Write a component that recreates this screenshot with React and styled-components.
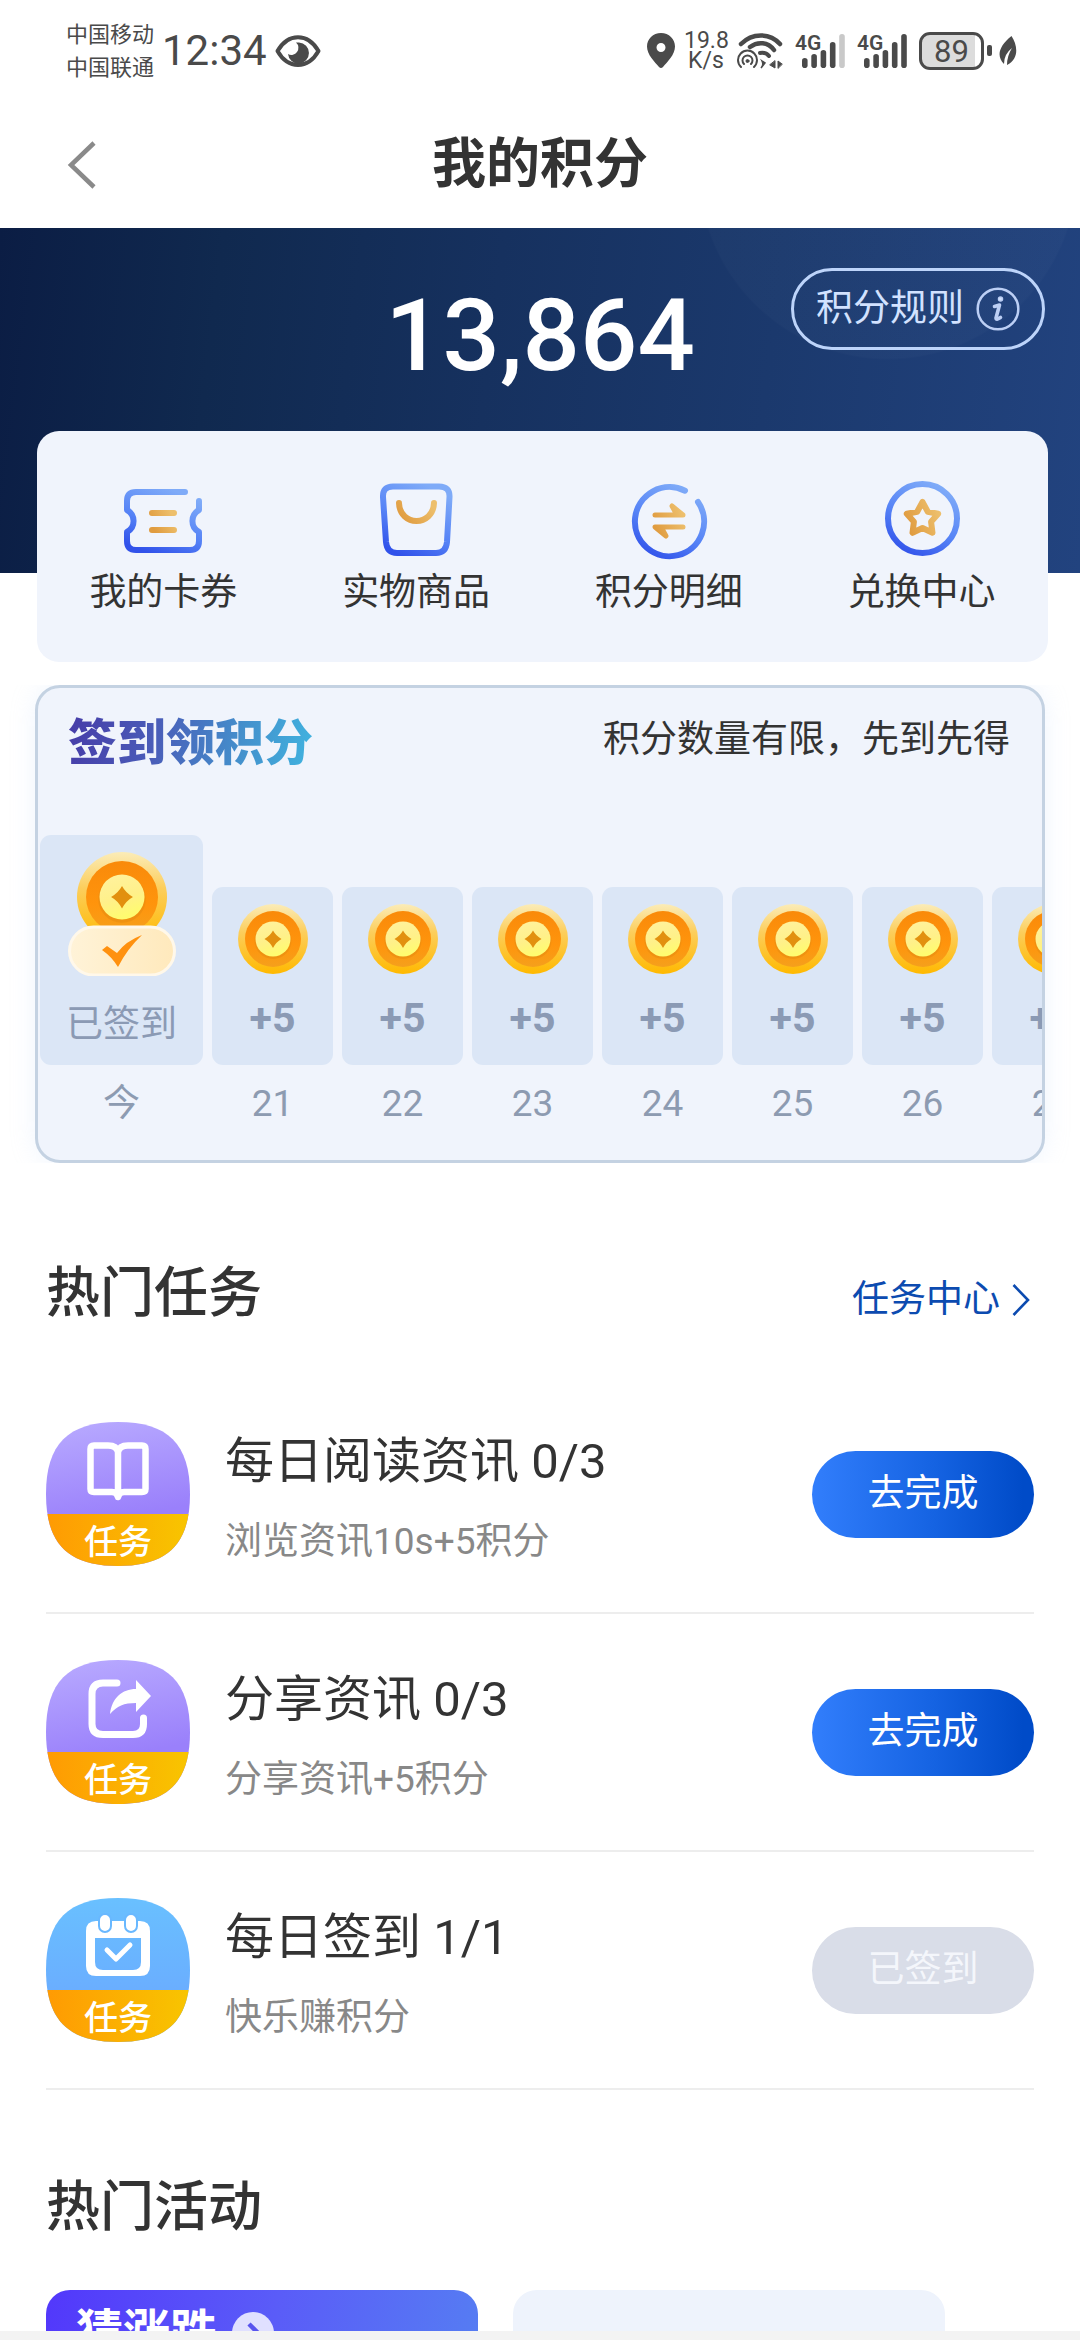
import React from "react";
import styled, { createGlobalStyle } from "styled-components";

const GlobalStyle = createGlobalStyle`
  *, *::before, *::after { box-sizing: border-box; }
  body {
    margin: 0;
    background: #fff;
    color: #333;
    font-family: Roboto, "Noto Sans CJK SC", sans-serif;
    font-size: 37px;
    line-height: 48px;
  }
  h1, h2, h3, p, ul { margin: 0; padding: 0; }
  ul { list-style: none; }
  button { font: inherit; color: inherit; border: 0; padding: 0; background: none; cursor: pointer; }
  a { color: inherit; text-decoration: none; }
  svg { display: block; flex: none; }
`;

const Screen = styled.div`
  height: 100vh;
  display: flex;
  flex-direction: column;
`;

const Scroller = styled.main`
  flex: 1;
  min-height: 0;
  overflow-y: auto;
  scrollbar-width: none;
`;

const GestureBar = styled.div`
  flex: none;
  height: 9px;
  background: #f3f3f3;
`;

/* ---------- status bar ---------- */

const StatusBar = styled.div`
  flex: none;
  display: flex;
  align-items: center;
  justify-content: space-between;
  height: 101px;
  padding: 0 63px 0 66px;
  color: #4a4a4a;
`;

const StatusGroup = styled.div`
  display: flex;
  align-items: center;
  gap: ${(p) => p.$gap}px;
`;

const Carriers = styled.div`
  font-size: 22px;
  line-height: 33px;
`;

const Clock = styled.div`
  font-size: 42px;
`;

const Speed = styled.div`
  width: 44px;
  font-size: 23px;
  line-height: 20px;
  text-align: center;
`;

const Signal = styled.div`
  width: 50px;
  height: 36px;
  position: relative;
`;

const SignalLabel = styled.span`
  position: absolute;
  left: 0;
  top: 0;
  font-weight: 600;
  font-size: 21px;
  line-height: 20px;
`;

const Battery = styled.div`
  display: flex;
  align-items: center;
  gap: 3px;
  &::after {
    content: "";
    width: 5px;
    height: 11px;
    border-radius: 2px;
    background: #4a4a4a;
  }
`;

const BatteryCell = styled.div`
  width: 65px;
  height: 38px;
  border: 3px solid #4a4a4a;
  border-radius: 11px;
  background: linear-gradient(90deg, #dcdcdc 89%, #fff 89%);
  font-size: 31px;
  line-height: 33px;
  text-align: center;
`;

/* ---------- title bar ---------- */

const TitleBar = styled.header`
  flex: none;
  display: grid;
  grid-template-columns: 1fr auto 1fr;
  align-items: center;
  height: 127px;
  padding: 0 64px;
`;

const BackButton = styled.button`
  justify-self: start;
  display: flex;
`;

const PageTitle = styled.h1`
  font-size: 54px;
  line-height: 72px;
  font-weight: 700;
`;

/* ---------- hero ---------- */

const Hero = styled.section`
  display: grid;
  grid-template-columns: 1fr auto 1fr;
  align-items: start;
  height: 345px;
  padding: 40px 35px 0;
  background:
    radial-gradient(circle 190px at 888px -58px, rgba(255, 255, 255, 0.02) 99%, transparent 100%),
    linear-gradient(97deg, #0b1d44 0%, #10294f 20%, #16315f 45%, #1b396d 70%, #22437f 100%);
`;

const Balance = styled.p`
  grid-column: 2;
  font-size: 101px;
  line-height: 136px;
  font-weight: 500;
  color: #fff;
`;

const RuleButton = styled.button`
  justify-self: end;
  display: flex;
  align-items: center;
  gap: 12px;
  height: 82px;
  padding: 0 22px;
  border: 3px solid #bdd4fa;
  border-radius: 41px;
  color: #d2e2ff;
`;

const QuickCard = styled.nav`
  display: grid;
  grid-template-columns: repeat(4, 1fr);
  margin: -142px 32px 0 37px;
  padding: 49px 0 45px;
  border-radius: 22px;
  background: #f0f4fc;
  position: relative;
`;

const QuickLink = styled.a`
  display: flex;
  flex-direction: column;
  align-items: center;
  gap: 9px;
`;

/* ---------- check-in ---------- */

const CheckInWrap = styled.section`
  margin-top: 23px;
  padding: 0 35px;
  overflow: hidden;
`;

const CheckInCard = styled.div`
  height: 478px;
  border: 3px solid #c4d2e2;
  border-radius: 25px;
  background: #f0f4fc;
  box-shadow: 0 0 24px rgba(190, 215, 250, 0.25);
  overflow: hidden;
`;

const CheckInHead = styled.div`
  display: flex;
  justify-content: space-between;
  padding: 28px 32px 0 30px;
`;

const CheckInTitle = styled.h2`
  font-size: 49px;
  line-height: 56px;
  font-weight: 900;
  background: linear-gradient(100deg, #463ca8 0%, #4a5cb8 35%, #4490cc 70%, #40b4e0 100%);
  background-clip: text;
  -webkit-background-clip: text;
  color: transparent;
`;

const Days = styled.ul`
  display: flex;
  align-items: flex-end;
  gap: 9px;
  margin-top: 63px;
  padding-left: 2px;
`;

const Day = styled.li`
  flex: none;
  width: ${(p) => (p.$today ? 163 : 121)}px;
  text-align: center;
  color: #8d9bb1;
`;

const DayTile = styled.div`
  display: flex;
  flex-direction: column;
  align-items: center;
  justify-content: space-between;
  height: ${(p) => (p.$today ? 230 : 178)}px;
  padding: 17px 0 ${(p) => (p.$today ? 16 : 23)}px;
  margin-bottom: 15px;
  border-radius: 11px;
  background: #dbe6f6;
`;

const Reward = styled.span`
  font-size: ${(p) => (p.$today ? 37 : 41)}px;
  font-weight: ${(p) => (p.$today ? 400 : 700)};
  color: #8b9ab4;
`;

/* ---------- tasks ---------- */

const Section = styled.section`
  padding: 0 46px;
  margin-top: ${(p) => p.$top}px;
`;

const SectionHead = styled.div`
  display: flex;
  align-items: center;
  justify-content: space-between;
`;

const SectionTitle = styled.h2`
  font-size: 54px;
  line-height: 72px;
  font-weight: 500;
`;

const MoreLink = styled.a`
  display: flex;
  align-items: center;
  gap: 12px;
  padding: 12px 4px 0 0;
  color: #0c4bb0;
`;

const TaskList = styled.ul`
  margin-top: 46px;
`;

const TaskRow = styled.li`
  display: flex;
  align-items: center;
  height: 238px;
  border-bottom: 2px solid #ededed;
`;

const TaskBadge = styled.div`
  flex: none;
  width: 144px;
  height: 144px;
  clip-path: path("M72 0C122 0 144 22 144 72C144 122 122 144 72 144C22 144 0 122 0 72C0 22 22 0 72 0Z");
  background: ${(p) =>
    p.$tone === "blue"
      ? "linear-gradient(180deg, #69c0ff, #6aaeff 64%)"
      : "linear-gradient(170deg, #b9abff, #9a80fb 64%)"};
`;

const BadgeIcon = styled.div`
  display: flex;
  justify-content: center;
  height: 92px;
  padding-top: 16px;
`;

const BadgeLabel = styled.div`
  height: 52px;
  padding-top: 4px;
  background: linear-gradient(90deg, #ff9a03, #f8c500);
  color: #fff;
  font-size: 34px;
  font-weight: 500;
  text-align: center;
`;

const TaskText = styled.div`
  flex: 1;
  display: flex;
  flex-direction: column;
  gap: 26px;
  padding: 10px 0 0 35px;
`;

const TaskTitle = styled.h3`
  font-size: 49px;
  line-height: 60px;
  font-weight: 400;
`;

const TaskNote = styled.p`
  color: #888;
`;

const TaskButton = styled.button`
  width: 222px;
  height: 87px;
  border-radius: 44px;
  color: #fff;
  background: linear-gradient(90deg, #327efc, #1563e2 55%, #004bc8 95%);
  &:disabled {
    background: #d9dde8;
    color: #f4f6fb;
  }
`;

/* ---------- activities ---------- */

const Activities = styled.div`
  display: flex;
  gap: 35px;
  margin-top: 46px;
`;

const ActivityCard = styled.a`
  flex: none;
  display: flex;
  align-items: flex-start;
  gap: 15px;
  width: 432px;
  height: 200px;
  padding: 12px 30px;
  border-radius: 24px;
  background: ${(p) => (p.$accent ? "linear-gradient(100deg, #5238fb, #5a5cf8 50%, #5580f2)" : "#eef3fc")};
  color: #fff;
  font-size: 47px;
  line-height: 60px;
  font-weight: 700;
`;

const IconSlot = styled.span`
  padding-top: 10px;
`;

/* ---------- drawings ---------- */

const EyeIcon = () => (
  <svg width="46" height="32" viewBox="0 0 46 32" aria-hidden="true">
    <path d="M2.5 16C13-2.5 33-2.5 43.5 16C33 34.500 13 34.500 2.500 16Z" fill="none" stroke="#4a4a4a" strokeWidth="4" strokeLinejoin="round" />
    <path d="M24 7.500A10.500 10.500 0 1 1 13 19A6.500 6.500 0 0 0 22 17A7 7 0 0 0 21 7.500Z" fill="#4a4a4a" />
  </svg>
);

const PinIcon = () => (
  <svg width="28" height="35" viewBox="0 0 28 35" aria-hidden="true">
    <path fillRule="evenodd" fill="#4a4a4a" d="M14 0C22 0 28 6 28 13.500C28 22 20 29 16 34Q14 36 12 34C8 29 0 22 0 13.500C0 6 6 0 14 0ZM14 10A4.500 4.500 0 1 0 14 19A4.500 4.500 0 1 0 14 10Z" />
  </svg>
);

const WifiIcon = () => (
  <svg width="46" height="36" viewBox="0 0 46 36" fill="none" stroke="#4a4a4a" strokeLinecap="round" aria-hidden="true">
    <path d="M4 11C15-.5 33-.5 43 11" strokeWidth="4.500" />
    <path d="M13 14C21 8 31 9 37 17" strokeWidth="4.500" />
    <path d="M23 20Q29 19 32 23" strokeWidth="4" />
    <path d="M4 34A9.500 9.500 0 1 1 17 34M7 31A5 5 0 1 1 14 31" strokeWidth="2" />
    <circle cx="10.500" cy="28" r="1.500" fill="#4a4a4a" strokeWidth="1" />
    <path d="M25 28Q27 32 24 35L28 30Z" fill="#4a4a4a" strokeWidth="1.500" />
    <path d="M38 28V35L33 32ZM41 35V28L45 31Z" fill="#4a4a4a" strokeWidth="1" />
  </svg>
);

const SignalBars = ({ level }) => (
  <svg width="50" height="36" viewBox="0 0 50 36" aria-hidden="true">
    {[25, 21, 17, 9, 1].map((top, i) => (
      <rect key={top} x={7 + i * 9.300} y={top} width="5.600" height={35 - top} rx="2.800" fill={i < level ? "#4a4a4a" : "#c9c9c9"} />
    ))}
  </svg>
);

const LeafIcon = () => (
  <svg width="18" height="30" viewBox="0 0 18 30" aria-hidden="true">
    <path d="M12.500 0C19 10 20 23 8 29Q8 20 13 12Q5 18 5 28C-3 20 0 10 12.500 0Z" fill="#4a4a4a" />
  </svg>
);

const BackIcon = () => (
  <svg width="34" height="52" viewBox="0 0 34 52" fill="none" stroke="#8a8a8a" strokeWidth="4.500" aria-hidden="true">
    <path d="M30 4L7 26L30 48" />
  </svg>
);

const InfoIcon = () => (
  <svg width="44" height="44" viewBox="0 0 44 44" fill="none" stroke="#bccff5" strokeLinecap="round" strokeLinejoin="round" aria-hidden="true">
    <circle cx="22" cy="22" r="20.300" strokeWidth="2.500" />
    <circle cx="24.500" cy="12" r="2" fill="#d2e2ff" strokeWidth="1.500" />
    <path d="M18.500 19.500L23.500 18L20 31Q20 33.500 24.500 30.500" strokeWidth="3.600" />
  </svg>
);

const quickShapes = {
  ticket: (
    <>
      <path stroke="url(#quickBlue)" d="M62 12H13Q4 12 4 21V30A12.500 12.500 0 0 1 4 52V61Q4 70 13 70H67Q76 70 76 61V52A12.500 12.500 0 0 1 76 30V21" />
      <path stroke="url(#quickGold)" d="M29 32.900L51 33M29 49.900L51 50" />
    </>
  ),
  bag: (
    <>
      <path stroke="url(#quickBlue)" d="M17 6.500H63Q74 6.500 73.500 17L71 62Q70 73 60 73H21Q11 73 10 62L7 17Q6.500 6.500 17 6.500Z" />
      <path stroke="url(#quickGold)" d="M23 23C24 47 57 47 58 23" />
    </>
  ),
  swap: (
    <>
      <path stroke="url(#quickBlue)" d="M69 22A34.600 34.600 0 1 1 56 10.700" />
      <path stroke="url(#quickGold)" fill="url(#quickGold)" strokeWidth="5" d="M26 35H54L43 26L48 35M54 47H26L37 56L32 47" />
    </>
  ),
  star: (
    <>
      <circle stroke="url(#quickBlue)" cx="40.500" cy="38.500" r="34.500" />
      <path stroke="url(#quickGold)" d="M40.500 22L45.800 31.700L56.200 33.700L49.100 41.800L50.500 52.800L40.500 48L30.500 52.800L31.900 41.800L24.800 33.700L35.200 31.700Z" />
    </>
  ),
};

const QuickIcon = ({ name }) => (
  <svg width="80" height="80" viewBox="0 0 80 80" fill="none" strokeWidth="6" strokeLinecap="round" strokeLinejoin="round" aria-hidden="true">
    <defs>
      <linearGradient id="quickBlue" x1="0.200" y1="1" x2="0.700" y2="0">
        <stop offset="0" stopColor="#3152ea" />
        <stop offset="0.450" stopColor="#5683f6" />
        <stop offset="1" stopColor="#7fabf8" />
      </linearGradient>
      <linearGradient id="quickGold" x1="0" y1="0.700" x2="1" y2="0.300">
        <stop offset="0" stopColor="#e09c40" />
        <stop offset="1" stopColor="#edbf6c" />
      </linearGradient>
    </defs>
    {quickShapes[name]}
  </svg>
);

const CoinShape = () => (
  <>
    <defs>
      <linearGradient id="coinRim" x1="0" y1="0" x2="0" y2="1">
        <stop offset="0" stopColor="#fbecb8" />
        <stop offset="0.400" stopColor="#fcce5c" />
        <stop offset="1" stopColor="#ffb900" />
      </linearGradient>
      <linearGradient id="coinRing" x1="0" y1="0" x2="0" y2="1">
        <stop offset="0" stopColor="#f98a0a" />
        <stop offset="0.600" stopColor="#ff940c" />
        <stop offset="1" stopColor="#f5a01c" />
      </linearGradient>
      <linearGradient id="coinCore" x1="0" y1="0" x2="0.300" y2="1">
        <stop offset="0" stopColor="#fff2a0" />
        <stop offset="0.600" stopColor="#fff08a" />
        <stop offset="1" stopColor="#fffb70" />
      </linearGradient>
    </defs>
    <circle cx="35" cy="35" r="35" fill="url(#coinRim)" />
    <circle cx="35" cy="35" r="28" fill="url(#coinRing)" />
    <circle cx="35" cy="36.500" r="18.500" fill="#e88c10" opacity="0.600" />
    <circle cx="35" cy="35" r="17.500" fill="url(#coinCore)" />
    <path d="M35 26.500Q38 32 43.500 35Q38 38 35 44Q32 38 26.500 35Q32 32 35 26.500Z" fill="#e2900f" />
  </>
);

const Coin = () => (
  <svg width="70" height="70" viewBox="0 0 70 70" aria-hidden="true">
    <CoinShape />
  </svg>
);

const SignedCoin = () => (
  <svg width="108" height="124" viewBox="0 0 108 124" aria-hidden="true">
    <defs>
      <linearGradient id="pill" x1="0" y1="0" x2="1" y2="0">
        <stop offset="0" stopColor="#fff3d8" />
        <stop offset="1" stopColor="#ffe9bc" />
      </linearGradient>
    </defs>
    <g transform="translate(9 0) scale(1.286)">
      <CoinShape />
    </g>
    <rect x="1.500" y="75" width="105" height="48" rx="24" fill="url(#pill)" stroke="#fff8ea" strokeWidth="3" />
    <path d="M34 98L39 94L49 101Q58 89 74 83Q59 97 50 115Q44 105 34 98Z" fill="#ff910f" />
  </svg>
);

const taskShapes = {
  book: (
    <path
      d="M32 57V14C31 9 27 7.500 22 7.500H8Q4.500 7.500 4.500 11V51Q4.500 54 8 54H26Q31 54 32 59Q33 54 38 54H56Q59.500 54 59.500 51V11Q59.500 7.500 56 7.500H42C37 7.500 33 9 32 14"
      fill="none"
      stroke="#fff"
      strokeWidth="6.500"
      strokeLinejoin="round"
    />
  ),
  share: (
    <>
      <path d="M31 7H17Q6 7 6 18V48Q6 58.500 17 58.500H47Q57.500 58.500 57.500 48V42" fill="none" stroke="#fff" strokeWidth="7" strokeLinecap="round" />
      <path d="M50 4L65 20L50 36V27C38 27 31 30 24 38C26 22 36 13 50 13Z" fill="#fff" />
    </>
  ),
  calendar: (
    <>
      <path fillRule="evenodd" fill="#fff" d="M10 7H54Q64 7 64 17V52Q64 62 54 62H10Q0 62 0 52V17Q0 7 10 7ZM9 24V48Q9 56 17 56H47Q55 56 55 48V24Z" />
      <rect x="13" y="0" width="12" height="18" rx="6" fill="#fff" stroke="#69b8ff" strokeWidth="2" />
      <rect x="39" y="0" width="12" height="18" rx="6" fill="#fff" stroke="#69b8ff" strokeWidth="2" />
      <path d="M21 36L30 45L44 31" fill="none" stroke="#fff" strokeWidth="5" strokeLinecap="round" strokeLinejoin="round" />
    </>
  ),
};

const TaskIcon = ({ name }) => (
  <svg width="64" height="64" viewBox="0 0 64 64" overflow="visible" aria-hidden="true">
    {taskShapes[name]}
  </svg>
);

const MoreIcon = () => (
  <svg width="18" height="34" viewBox="0 0 18 34" fill="none" stroke="#0c4bb0" strokeWidth="2.600" aria-hidden="true">
    <path d="M1.500 2L16 17L1.500 32" />
  </svg>
);

const GoIcon = () => (
  <svg width="42" height="42" viewBox="0 0 42 42" aria-hidden="true">
    <circle cx="21" cy="21" r="21" fill="#e0e0ff" />
    <path d="M17 12L26 21L17 30" fill="none" stroke="#5854ee" strokeWidth="4.500" />
  </svg>
);

/* ---------- data ---------- */

const quickLinks = [
  { icon: "ticket", label: "我的卡券" },
  { icon: "bag", label: "实物商品" },
  { icon: "swap", label: "积分明细" },
  { icon: "star", label: "兑换中心" },
];

const upcoming = [21, 22, 23, 24, 25, 26, 27];

const tasks = [
  { icon: "book", title: "每日阅读资讯 0/3", note: "浏览资讯10s+5积分", action: "去完成" },
  { icon: "share", title: "分享资讯 0/3", note: "分享资讯+5积分", action: "去完成" },
  { icon: "calendar", tone: "blue", title: "每日签到 1/1", note: "快乐赚积分", action: "已签到", done: true },
];

export default function App() {
  return (
    <>
      <GlobalStyle />
      <Screen>
        <StatusBar>
          <StatusGroup $gap={8}>
            <Carriers>
              <div>中国移动</div>
              <div>中国联通</div>
            </Carriers>
            <Clock>12:34</Clock>
            <EyeIcon />
          </StatusGroup>
          <StatusGroup $gap={12}>
            <StatusGroup $gap={9}>
              <PinIcon />
              <Speed>19.8 K/s</Speed>
              <WifiIcon />
            </StatusGroup>
            <Signal>
              <SignalLabel>4G</SignalLabel>
              <SignalBars level={4} />
            </Signal>
            <Signal>
              <SignalLabel>4G</SignalLabel>
              <SignalBars level={5} />
            </Signal>
            <StatusGroup $gap={7}>
              <Battery>
                <BatteryCell>89</BatteryCell>
              </Battery>
              <LeafIcon />
            </StatusGroup>
          </StatusGroup>
        </StatusBar>

        <TitleBar>
          <BackButton aria-label="返回">
            <BackIcon />
          </BackButton>
          <PageTitle>我的积分</PageTitle>
        </TitleBar>

        <Scroller>
          <Hero>
            <Balance>13,864</Balance>
            <RuleButton>
              积分规则
              <InfoIcon />
            </RuleButton>
          </Hero>

          <QuickCard>
            {quickLinks.map((item) => (
              <QuickLink href="#" key={item.icon}>
                <QuickIcon name={item.icon} />
                {item.label}
              </QuickLink>
            ))}
          </QuickCard>

          <CheckInWrap>
            <CheckInCard>
              <CheckInHead>
                <CheckInTitle>签到领积分</CheckInTitle>
                <p>积分数量有限，先到先得</p>
              </CheckInHead>
              <Days>
                <Day $today>
                  <DayTile $today>
                    <SignedCoin />
                    <Reward $today>已签到</Reward>
                  </DayTile>
                  今
                </Day>
                {upcoming.map((day) => (
                  <Day key={day}>
                    <DayTile>
                      <Coin />
                      <Reward>+5</Reward>
                    </DayTile>
                    {day}
                  </Day>
                ))}
              </Days>
            </CheckInCard>
          </CheckInWrap>

          <Section $top={95}>
            <SectionHead>
              <SectionTitle>热门任务</SectionTitle>
              <MoreLink href="#">
                任务中心
                <MoreIcon />
              </MoreLink>
            </SectionHead>
            <TaskList>
              {tasks.map((task) => (
                <TaskRow key={task.icon}>
                  <TaskBadge $tone={task.tone}>
                    <BadgeIcon>
                      <TaskIcon name={task.icon} />
                    </BadgeIcon>
                    <BadgeLabel>任务</BadgeLabel>
                  </TaskBadge>
                  <TaskText>
                    <TaskTitle>{task.title}</TaskTitle>
                    <TaskNote>{task.note}</TaskNote>
                  </TaskText>
                  <TaskButton disabled={task.done}>{task.action}</TaskButton>
                </TaskRow>
              ))}
            </TaskList>
          </Section>

          <Section $top={82}>
            <SectionTitle>热门活动</SectionTitle>
            <Activities>
              <ActivityCard href="#" $accent>
                猜涨跌
                <IconSlot>
                  <GoIcon />
                </IconSlot>
              </ActivityCard>
              <ActivityCard href="#" aria-label="活动" />
            </Activities>
          </Section>
        </Scroller>
        <GestureBar />
      </Screen>
    </>
  );
}
